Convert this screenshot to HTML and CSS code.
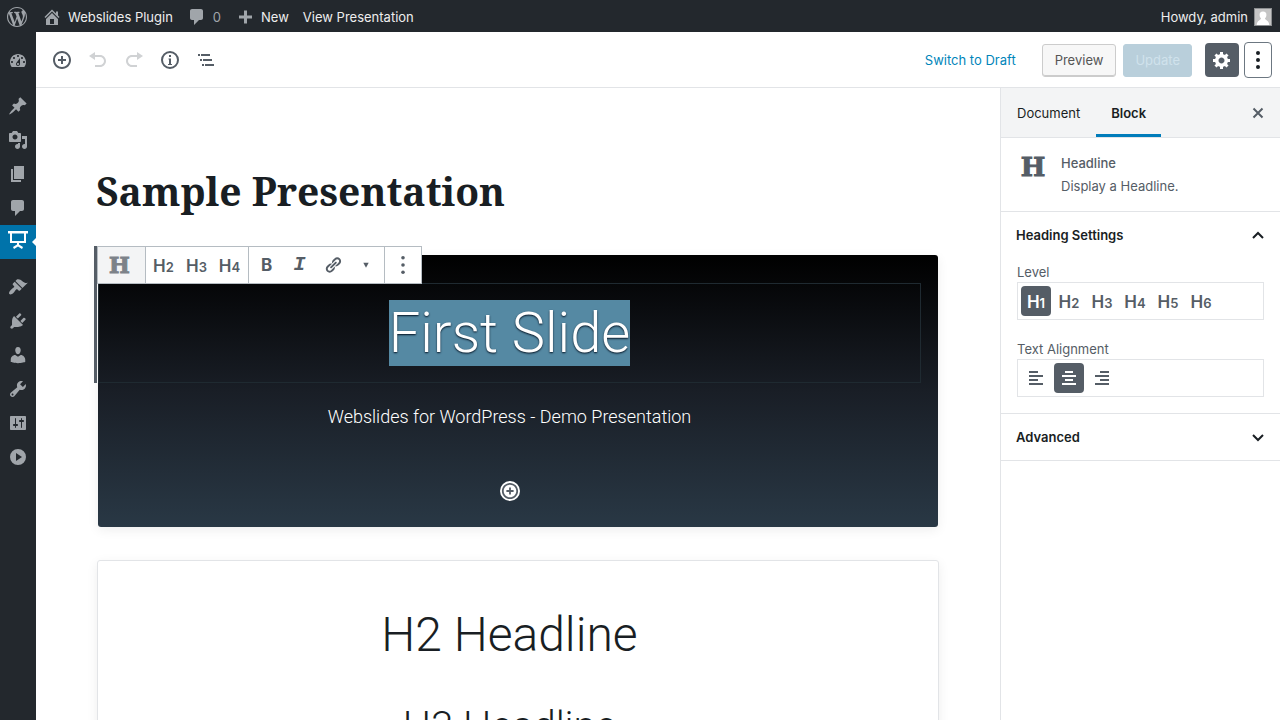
FILE: index.html
```html
<!DOCTYPE html>
<html lang="en">
<head>
<meta charset="utf-8">
<title>Edit Presentation</title>
<link rel="stylesheet" href="styles.css">
</head>
<body>
<div class="app">
  <header class="adminbar">
    <a class="bar-item logo" href="#" aria-label="WordPress"><svg class="ico" viewBox="0 0 20 20"><path d="M20 10c0-5.51-4.49-10-10-10C4.48 0 0 4.49 0 10c0 5.52 4.48 10 10 10 5.51 0 10-4.48 10-10zM7.78 15.37L4.37 6.22c.55-.02 1.17-.08 1.17-.08.5-.06.44-1.13-.06-1.11 0 0-1.45.11-2.37.11-.18 0-.37 0-.58-.01C4.12 2.69 6.87 1.11 10 1.11c2.33 0 4.45.87 6.05 2.34-.68-.11-1.65.39-1.65 1.58 0 .74.45 1.36.9 2.1.35.61.55 1.36.55 2.46 0 1.49-1.4 5-1.4 5l-3.03-8.37c.54-.02.82-.17.82-.17.5-.05.44-1.25-.06-1.22 0 0-1.44.12-2.38.12-.87 0-2.33-.12-2.33-.12-.5-.03-.56 1.2-.06 1.22l.92.08 1.26 3.41zM17.41 10c.24-.64.74-1.87.43-4.25.7 1.29 1.05 2.71 1.05 4.25 0 3.29-1.73 6.24-4.4 7.78.97-2.59 1.94-5.2 2.92-7.78zM6.1 18.09C3.12 16.65 1.11 13.53 1.11 10c0-1.3.23-2.48.72-3.59C3.25 10.3 4.67 14.2 6.1 18.09zm4.03-6.63l2.58 6.98c-.86.29-1.76.45-2.71.45-.79 0-1.57-.11-2.29-.33.81-2.38 1.62-4.74 2.42-7.1z"/></svg></a>
    <a class="bar-item site" href="#"><svg class="ico" viewBox="0 0 20 20"><path d="M16 8.5l1.53 1.53-1.06 1.06L10 4.6l-6.47 6.49-1.06-1.06L10 2.5l4 4v-2h2v4zm-6-2.46l6 5.99V18H4v-5.97zM12 17v-5H8v5h4z"/></svg>Webslides Plugin</a>
    <a class="bar-item comments" href="#"><svg class="ico" viewBox="0 0 20 20"><path d="M5 2h9c1.1 0 2 .9 2 2v7c0 1.1-.9 2-2 2h-2l-5 5v-5H5c-1.1 0-2-.9-2-2V4c0-1.1.9-2 2-2z"/></svg>0</a>
    <a class="bar-item new" href="#"><svg class="ico" viewBox="0 0 20 20"><path d="M17 8.500v3h-5v5H9v-5H4v-3h5v-5h3v5h5z"/></svg>New</a>
    <a class="bar-item" href="#">View Presentation</a>
    <a class="bar-item account" href="#">Howdy, admin<svg class="avatar" viewBox="0 0 18 18"><path fill="#8c8f91" d="M0 0h18v18H0z"/><path fill="#c5c5c5" d="M1 1h16v16H1z"/><path fill="#fff" d="M9 3.500a3.400 3.400 0 0 1 3.400 3.600c0 1.500-.6 2.800-1.500 3.500.3 1.700 4.100 1.900 4.400 6.400H2.700c.3-4.500 4.100-4.700 4.400-6.400-.9-.7-1.500-2-1.500-3.500A3.400 3.400 0 0 1 9 3.500z"/></svg></a>
  </header>

  <nav class="menu" aria-label="Main menu">
    <a href="#" aria-label="Dashboard"><svg class="ico" viewBox="0 0 20 20"><path d="M3.760 16h12.480c1.100-1.370 1.760-3.110 1.760-5 0-4.420-3.580-8-8-8s-8 3.580-8 8c0 1.890.66 3.630 1.760 5zM10 4c.55 0 1 .45 1 1s-.45 1-1 1-1-.45-1-1 .45-1 1-1zM6 6c.55 0 1 .45 1 1s-.45 1-1 1-1-.45-1-1 .45-1 1-1zm8 0c.55 0 1 .45 1 1s-.45 1-1 1-1-.45-1-1 .45-1 1-1zm-5.370 5.550L12 7v6c0 1.100-.9 2-2 2s-2-.9-2-2c0-.57.24-1.080.63-1.450zM4 10c.55 0 1 .45 1 1s-.45 1-1 1-1-.45-1-1 .45-1 1-1zm12 0c.55 0 1 .45 1 1s-.45 1-1 1-1-.45-1-1 .45-1 1-1zm-5 3c0-.55-.45-1-1-1s-1 .45-1 1 .45 1 1 1 1-.45 1-1z"/></svg></a>
    <a class="gap" href="#" aria-label="Posts"><svg class="ico" viewBox="0 0 20 20"><path d="M10.440 3.020l1.820-1.820 6.360 6.350-1.830 1.820c-1.050-.68-2.480-.57-3.410.36l-.75.75c-.92.93-1.040 2.350-.35 3.410l-1.830 1.820-2.410-2.410-2.800 2.790c-.42.42-3.380 2.710-3.800 2.290s1.860-3.390 2.280-3.810l2.790-2.790L4.100 9.360l1.830-1.820c1.050.69 2.480.57 3.400-.36l.75-.75c.93-.92 1.050-2.350.36-3.410z"/></svg></a>
    <a href="#" aria-label="Media"><svg class="ico" viewBox="0 0 20 20"><path d="M13 11V4c0-.55-.45-1-1-1h-1.670L9 1H5L3.670 3H2c-.55 0-1 .45-1 1v7c0 .55.45 1 1 1h10c.55 0 1-.45 1-1zM7 4.500c1.380 0 2.500 1.120 2.500 2.500S8.380 9.500 7 9.500 4.500 8.380 4.500 7 5.620 4.500 7 4.500zM14 6h5v10.500c0 1.380-1.120 2.500-2.500 2.500S14 17.880 14 16.500s1.120-2.500 2.500-2.500c.17 0 .34.02.5.05V9h-3V6zm-4 8.050V13h2v3.500c0 1.380-1.120 2.500-2.500 2.500S7 17.880 7 16.500 8.120 14 9.500 14c.17 0 .34.02.5.05z"/></svg></a>
    <a href="#" aria-label="Pages"><svg class="ico" viewBox="0 0 20 20"><path d="M6 15V2h10v13H6zm-1 1h8v2H3V5h2v11z"/></svg></a>
    <a href="#" aria-label="Comments"><svg class="ico" viewBox="0 0 20 20"><path d="M5 2h9c1.100 0 2 .9 2 2v7c0 1.100-.9 2-2 2h-2l-5 5v-5H5c-1.100 0-2-.9-2-2V4c0-1.100.9-2 2-2z"/></svg></a>
    <a class="current" href="#" aria-label="Presentations"><svg class="ico" viewBox="0 0 20 20"><path d="M0 1h20v2.500H0zM2 3h2v8h12V3h2v10h-7v1.500l4 2.500-1 2-4-2.600L6 19l-1-2 4-2.500V13H2z"/></svg></a>
    <a class="gap" href="#" aria-label="Appearance"><svg class="ico" viewBox="0 0 20 20"><path d="M14.480 11.060L7.410 3.990l1.500-1.500c.5-.56 2.300-.47 3.510.32 1.210.8 1.430 1.280 2.910 2.100 1.180.64 2.450 1.260 4.450.85zm-.71.71L6.700 4.700 4.930 6.470c-.39.39-.39 1.020 0 1.410l1.060 1.060c.39.39.39 1.030 0 1.420-.6.6-1.430 1.110-2.210 1.690-.35.26-.7.53-1.010.84C1.430 14.230.4 16.080 1.400 17.070c.99 1 2.840-.03 4.180-1.360.31-.31.58-.66.85-1.020.57-.78 1.080-1.610 1.690-2.210.39-.39 1.020-.39 1.410 0l1.060 1.060c.39.39 1.020.39 1.410 0z"/></svg></a>
    <a href="#" aria-label="Plugins"><svg class="ico" viewBox="0 0 20 20"><path d="M13.110 4.360L9.870 7.600 8 5.730l3.240-3.240c.35-.34 1.050-.2 1.560.32.52.51.66 1.210.31 1.550zm-8 1.770l.91-1.120 9.010 9.010-1.190.84c-.71.71-2.630 1.160-3.820 1.160H6.140L4.900 17.260c-.59.59-1.540.59-2.120 0-.59-.58-.59-1.530 0-2.120l1.240-1.240v-3.880c0-1.130.4-3.190 1.090-3.890zm7.260 3.970l3.240-3.240c.34-.35 1.040-.21 1.550.31.52.51.66 1.210.31 1.550l-3.240 3.250z"/></svg></a>
    <a href="#" aria-label="Users"><svg class="ico" viewBox="0 0 20 20"><path d="M10 9.250c-2.270 0-2.730-3.440-2.730-3.440C7 4.020 7.820 2 9.970 2c2.160 0 2.980 2.020 2.710 3.810 0 0-.41 3.440-2.680 3.440zm0 2.570L12.720 10c2.390 0 4.520 2.330 4.520 4.530v2.490s-3.650 1.130-7.240 1.130c-3.650 0-7.240-1.130-7.240-1.130v-2.490c0-2.250 1.940-4.480 4.470-4.480z"/></svg></a>
    <a href="#" aria-label="Tools"><svg class="ico" viewBox="0 0 20 20"><path d="M16.680 9.770c-1.340 1.340-3.300 1.670-4.950.99l-5.410 6.520c-.99.99-2.590.99-3.580 0s-.99-2.590 0-3.570l6.520-5.420c-.68-1.650-.35-3.610.99-4.950 1.280-1.280 3.120-1.620 4.720-1.060l-2.890 2.890 2.820 2.820 2.860-2.870c.53 1.580.18 3.390-1.080 4.650zM3.810 16.210c.4.39 1.040.39 1.430 0 .4-.4.4-1.040 0-1.430-.39-.4-1.030-.4-1.430 0-.39.39-.39 1.030 0 1.430z"/></svg></a>
    <a href="#" aria-label="Settings"><svg class="ico" viewBox="0 0 20 20"><path d="M18 16V4c0-.55-.45-1-1-1H3c-.55 0-1 .45-1 1v12c0 .55.45 1 1 1h14c.55 0 1-.45 1-1zM8 11h1c.55 0 1 .45 1 1s-.45 1-1 1H8v1.500c0 .28-.22.5-.5.5s-.5-.22-.5-.5V13H6c-.55 0-1-.45-1-1s.45-1 1-1h1V5.500c0-.28.22-.5.5-.5s.5.22.5.5V11zm5-2h-1c-.55 0-1-.45-1-1s.45-1 1-1h1V5.500c0-.28.22-.5.5-.5s.5.22.5.5V7h1c.55 0 1 .45 1 1s-.45 1-1 1h-1v5.500c0 .28-.22.5-.5.5s-.5-.22-.5-.5V9z"/></svg></a>
    <a href="#" aria-label="Collapse menu"><svg class="ico" viewBox="0 0 20 20"><path fill-rule="evenodd" d="M10 2a8 8 0 1 0 0 16 8 8 0 0 0 0-16zM8 6l6 4-6 4z"/></svg></a>
  </nav>

  <div class="editor">
    <div class="toolbar">
      <div class="tools">
        <button type="button" aria-label="Add block"><svg class="ico" viewBox="0 0 20 20"><path d="M10 1c-5 0-9 4-9 9s4 9 9 9 9-4 9-9-4-9-9-9zm0 16c-3.900 0-7-3.100-7-7s3.100-7 7-7 7 3.100 7 7-3.100 7-7 7zm1-11H9v3H6v2h3v3h2v-3h3V9h-3V6z"/></svg></button>
        <button type="button" disabled aria-label="Undo"><svg class="ico" viewBox="0 0 20 20"><path d="M12 5H7V2L1 6l6 4V7h5c2.200 0 4 1.800 4 4s-1.800 4-4 4H7v2h5c3.300 0 6-2.700 6-6s-2.700-6-6-6z"/></svg></button>
        <button type="button" disabled aria-label="Redo"><svg class="ico" viewBox="0 0 20 20"><path d="M8 5h5V2l6 4-6 4V7H8c-2.200 0-4 1.800-4 4s1.800 4 4 4h5v2H8c-3.300 0-6-2.700-6-6s2.700-6 6-6z"/></svg></button>
        <button type="button" aria-label="Content structure"><svg class="ico" viewBox="0 0 20 20"><path fill-rule="evenodd" d="M10 1a9 9 0 1 0 0 18 9 9 0 0 0 0-18zm0 2a7 7 0 1 1 0 14 7 7 0 0 1 0-14zM9 5h2v2H9zm-.500 3.500H11V14h1v1H8v-1h1V9.500h-.500z"/></svg></button>
        <button type="button" aria-label="Block navigation"><svg class="ico" viewBox="0 0 20 20"><path d="M2 4h2v2H2zM5 4h9v2H5zM4 9h2v2H4zM7 9h9v2H7zM6 14h2v2H6zM9 14h9v2H9z"/></svg></button>
      </div>
      <div class="actions">
        <button type="button" class="link">Switch to Draft</button>
        <button type="button" class="btn preview">Preview</button>
        <button type="button" class="btn update" disabled>Update</button>
        <button type="button" class="square gear" aria-label="Settings"><svg class="ico" viewBox="0 0 20 20"><path d="M18 12h-2.180c-.17.7-.44 1.350-.81 1.930l1.540 1.540-2.100 2.100-1.540-1.540c-.58.36-1.230.63-1.910.79V19H8v-2.180c-.68-.16-1.330-.43-1.910-.79l-1.540 1.540-2.120-2.120 1.540-1.540c-.36-.58-.63-1.230-.79-1.910H1V9.030h2.170c.16-.7.44-1.350.8-1.940L2.430 5.550l2.100-2.100 1.540 1.540c.58-.37 1.240-.64 1.930-.81V2h3v2.180c.68.16 1.330.43 1.910.79l1.540-1.540 2.120 2.120-1.540 1.540c.36.59.64 1.240.8 1.940H18V12zm-8.500 1.500c1.660 0 3-1.340 3-3s-1.340-3-3-3-3 1.340-3 3 1.340 3 3 3z"/></svg></button>
        <button type="button" class="square more" aria-label="More"><svg class="ico" viewBox="0 0 20 20"><circle cx="10" cy="3" r="2"/><circle cx="10" cy="10" r="2"/><circle cx="10" cy="17" r="2"/></svg></button>
      </div>
    </div>

    <div class="workspace">
      <main class="canvas">
        <h1 class="title">Sample Presentation</h1>
        <section class="slide dark">
          <div class="block selected">
            <div class="block-tools">
              <div class="group type"><button type="button" aria-label="Headline" class="slab">H</button></div>
              <div class="group"><button type="button" class="lvl">H<small>2</small></button><button type="button" class="lvl">H<small>3</small></button><button type="button" class="lvl">H<small>4</small></button></div>
              <div class="group"><button type="button" class="bold">B</button><button type="button" class="ital">I</button><button type="button" aria-label="Link"><svg class="ico" viewBox="0 0 20 20"><path d="M17.740 2.760c1.680 1.690 1.680 4.410 0 6.100l-1.530 1.520c-1.120 1.120-2.700 1.470-4.140 1.090l2.620-2.610.76-.77.76-.76c.84-.84.84-2.200 0-3.040-.84-.85-2.200-.85-3.040 0l-.77.76-3.380 3.380c-.37-1.440-.02-3.020 1.100-4.140l1.520-1.530c1.690-1.680 4.420-1.680 6.100 0zM8.590 13.430l5.340-5.340c.42-.42.42-1.100 0-1.520-.44-.43-1.130-.39-1.530 0l-5.330 5.340c-.42.42-.42 1.100 0 1.520.44.43 1.130.39 1.520 0zm-.76 2.290l4.140-4.150c.38 1.440.03 3.020-1.090 4.140l-1.520 1.530c-1.690 1.680-4.410 1.680-6.100 0-1.680-1.680-1.680-4.420 0-6.100l1.530-1.520c1.120-1.120 2.700-1.470 4.140-1.100l-4.140 4.150c-.85.84-.85 2.200 0 3.050.84.84 2.200.84 3.040 0z"/></svg></button><button type="button" aria-label="More formatting"><svg class="ico" viewBox="0 0 20 20"><path d="M7 7.500h6L10 13z"/></svg></button></div>
              <div class="group last"><button type="button" aria-label="More options"><svg class="ico" viewBox="0 0 20 20"><circle cx="10" cy="2" r="2"/><circle cx="10" cy="10" r="2"/><circle cx="10" cy="18" r="2"/></svg></button></div>
            </div>
            <h1 class="headline h1"><span class="selection">First Slide</span></h1>
          </div>
          <p class="lead">Webslides for WordPress - Demo Presentation</p>
          <button type="button" class="appender" aria-label="Add block"><svg class="ico" viewBox="0 0 20 20"><path d="M10 1c-5 0-9 4-9 9s4 9 9 9 9-4 9-9-4-9-9-9zm0 16c-3.900 0-7-3.100-7-7s3.100-7 7-7 7 3.100 7 7-3.100 7-7 7zm1-11H9v3H6v2h3v3h2v-3h3V9h-3V6z"/></svg></button>
        </section>
        <section class="slide light">
          <h2 class="headline h2">H2 Headline</h2>
          <h3 class="headline h3">H3 Headline</h3>
        </section>
      </main>

      <aside class="side">
        <div class="tabs">
          <button type="button" class="tab">Document</button>
          <button type="button" class="tab active">Block</button>
          <button type="button" class="close" aria-label="Close settings"><svg class="ico" viewBox="0 0 20 20"><path fill="none" stroke="currentColor" stroke-width="2.200" d="M5 5l10 10m0-10L5 15"/></svg></button>
        </div>
        <div class="card">
          <span class="slab big" aria-hidden="true">H</span>
          <div class="card-text"><div class="card-name">Headline</div><div>Display a Headline.</div></div>
        </div>
        <section class="panel">
          <button type="button" class="panel-title">Heading Settings<svg class="chev" viewBox="0 0 14 14"><path fill="none" stroke="currentColor" stroke-width="2" d="M2 10l5-5 5 5"/></svg></button>
          <div class="panel-body">
            <div class="field-label" id="level">Level</div>
            <div class="choices" role="group" aria-labelledby="level"><button type="button" class="lvl on">H<small>1</small></button><button type="button" class="lvl">H<small>2</small></button><button type="button" class="lvl">H<small>3</small></button><button type="button" class="lvl">H<small>4</small></button><button type="button" class="lvl">H<small>5</small></button><button type="button" class="lvl">H<small>6</small></button></div>
            <div class="field-label" id="align">Text Alignment</div>
            <div class="choices" role="group" aria-labelledby="align"><button type="button" aria-label="Align left"><svg class="ico" viewBox="0 0 20 20"><path d="M12 5V3H3v2h9zm5 4V7H3v2h14zm-5 4v-2H3v2h9zm5 4v-2H3v2h14z"/></svg></button><button type="button" class="on" aria-label="Align center"><svg class="ico" viewBox="0 0 20 20"><path d="M14 5V3H6v2h8zm3 4V7H3v2h14zm-3 4v-2H6v2h8zm3 4v-2H3v2h14z"/></svg></button><button type="button" aria-label="Align right"><svg class="ico" viewBox="0 0 20 20"><path d="M17 5V3H8v2h9zm0 4V7H3v2h14zm0 4v-2H8v2h9zm0 4v-2H3v2h14z"/></svg></button></div>
          </div>
        </section>
        <section class="panel">
          <button type="button" class="panel-title">Advanced<svg class="chev" viewBox="0 0 14 14"><path fill="none" stroke="currentColor" stroke-width="2" d="M2 5l5 5 5-5"/></svg></button>
        </section>
      </aside>
    </div>
  </div>
</div>
</body>
</html>
```
FILE: styles.css
```css
* { box-sizing: border-box; }
body { margin: 0; font: 13px/20px Inter, "Liberation Sans", sans-serif; color: #191e23; background: #fff; }
button { font: inherit; color: inherit; background: none; border: 0; padding: 0; margin: 0; display: flex; align-items: center; justify-content: center; }
a { color: inherit; text-decoration: none; }
h1, h2, h3, p { margin: 0; }
.ico { width: 20px; height: 20px; fill: currentColor; display: block; flex: none; }

.app { height: 100vh; display: grid; grid-template: 32px minmax(0, 1fr) / 36px minmax(0, 1fr); overflow: hidden; }

.adminbar { grid-column: 1 / -1; background: #23282d; color: #eee; display: flex; align-items: center; padding: 1px 8px 0 7px; }
.bar-item { display: flex; align-items: center; gap: 6px; margin-right: 14px; }
.bar-item .ico { color: #a0a5aa; }
.logo { color: #a0a5aa; margin-right: 15px; }
.comments { color: #a0a5aa; }
.account { margin: 0 0 0 auto; }
.avatar { width: 18px; height: 18px; }

.menu { background: #23282d; color: #a0a5aa; padding-top: 12px; }
.menu a { display: flex; height: 34px; align-items: center; justify-content: center; position: relative; }
.menu .ico { width: 20px; height: 20px; }
.menu .gap { margin-top: 11px; }
.menu .current { background: #0073aa; color: #fff; padding-bottom: 4px; }
.menu .current::after { content: ""; position: absolute; right: 0; top: 13px; border: 4px solid transparent; border-left: 0; border-right-color: #fff; }

.editor { display: flex; flex-direction: column; min-height: 0; min-width: 0; }
.toolbar { height: 56px; flex: none; border-bottom: 1px solid #e2e4e7; display: flex; align-items: center; justify-content: space-between; padding: 1px 8px 0; }
.tools { display: flex; color: #555d66; }
.tools button { width: 36px; height: 36px; }
.tools button:disabled { color: #d0d2d4; }
.actions { display: flex; align-items: center; }
.link { color: #0085ba; margin-right: 26px; }
.btn { height: 33px; padding: 0 12px; border-radius: 3px; border: 1px solid #ccc; }
.preview { background: #f7f7f7; color: #555; box-shadow: inset 0 -1px 0 #ccc; }
.update { background: #b9cfdb; border-color: #b9cfdb; color: #d0e2ec; padding: 0 11px; margin: 0 13px 0 7px; }
.square { height: 34px; border-radius: 4px; }
.gear { width: 34px; background: #555d66; color: #fff; margin-right: 5px; }
.more { width: 28px; height: 36px; border: 1px solid #6c7781; color: #191e23; }

.workspace { display: flex; flex: 1; min-height: 0; }
.canvas { flex: 1; min-width: 0; overflow: hidden; padding: 75px 62px 0; }
.title { font: 700 39px/56px "Noto Serif", "DejaVu Serif Condensed", serif; margin: 0 -2px 36px; }
.slide { border-radius: 3px; padding-right: 17px; text-align: center; font-family: Roboto, sans-serif; font-weight: 300; box-shadow: 0 3px 12px rgba(0, 0, 0, .07); }
.dark { height: 272px; padding-top: 28px; background: linear-gradient(#000, #191e26 50%, #293845); color: #fff; display: flex; flex-direction: column; align-items: stretch; margin-bottom: 33px; }
.block { position: relative; border: 1px solid #1f2a31; height: 100px; padding: 16px 0; }
.selected::before { content: ""; position: absolute; left: -5px; top: -38px; bottom: -1px; width: 3px; background: #555d66; }
.block-tools { position: absolute; left: -2px; top: -38px; display: flex; height: 38px; background: #fff; border: 1px solid #b5bcc2; color: #555d66; font-family: Inter, sans-serif; }
.group { display: flex; padding: 0 2px 0 1px; border-right: 1px solid #b5bcc2; }
.group button { width: 33px; height: 36px; }
.group.last { border: 0; }
.group.type { padding: 0; background: #f3f4f5; }
.group.type button { width: 47px; padding-right: 4px; color: #7c8289; }
.slab { font: 700 22px/24px "DejaVu Serif", serif; -webkit-text-stroke: 1px currentColor; }
.lvl { font-weight: 600; font-size: 17px; align-items: baseline; line-height: 38px; }
.lvl small { font-size: 13px; }
.group .bold { font-weight: 700; font-size: 17px; line-height: 38px; }
.group .ital { font: italic 700 20px/38px "Liberation Mono", monospace; }
.group .ico { width: 18px; height: 18px; }
.headline { font-weight: 300; }
.h1 { font-size: 56px; line-height: 66px; }
.selection { display: inline-block; background: #5589a3; text-shadow: 0 1px 2px #001020; }
.lead { font-size: 18px; line-height: 28px; margin-top: 20px; }
.appender { width: 20px; height: 20px; border-radius: 50%; background: #fff; color: #555d66; margin: 50px auto 0; }
.appender .ico { width: 18px; height: 18px; }
.light { border: 1px solid #e2e4e7; height: 272px; padding-top: 45px; margin: 0 -1px; }
.h2 { font-size: 48px; line-height: 58px; }
.h3 { font-size: 40px; line-height: 48px; margin-top: 39px; }

.side { width: 280px; flex: none; border-left: 1px solid #e2e4e7; color: #555d66; }
.tabs { height: 50px; background: #f3f4f5; border-bottom: 1px solid #e2e4e7; display: flex; color: #191e23; }
.tab { padding: 3px 16px 0; border-bottom: 3px solid transparent; }
.tab.active { font-weight: 600; border-color: #007cba; padding: 3px 15px 0; }
.close { margin-left: auto; width: 45px; color: #555d66; }
.close .ico { width: 18px; height: 18px; }
.card { display: flex; padding: 14px 16px; border-bottom: 1px solid #e2e4e7; height: 74px; gap: 12px; }
.card-text { line-height: 23px; }
.card-name { font-weight: 500; }
.slab.big { font-size: 26px; line-height: 30px; width: 32px; text-align: center; }
.panel { border-bottom: 1px solid #e2e4e7; }
.panel-title { width: 100%; height: 46px; justify-content: space-between; padding: 0 15px; font-weight: 600; color: #191e23; }
.chev { width: 14px; height: 14px; }
.panel-body { padding: 4px 16px 16px; }
.field-label { line-height: 20px; }
.choices { display: flex; align-items: center; gap: 3px; height: 38px; border: 1px solid #e2e4e7; padding: 0 3px; margin-bottom: 19px; }
.choices:last-child { margin-bottom: 0; }
.choices button { width: 30px; height: 30px; border-radius: 4px; line-height: 32px; }
.choices .on { background: #555d66; color: #fff; }
```
